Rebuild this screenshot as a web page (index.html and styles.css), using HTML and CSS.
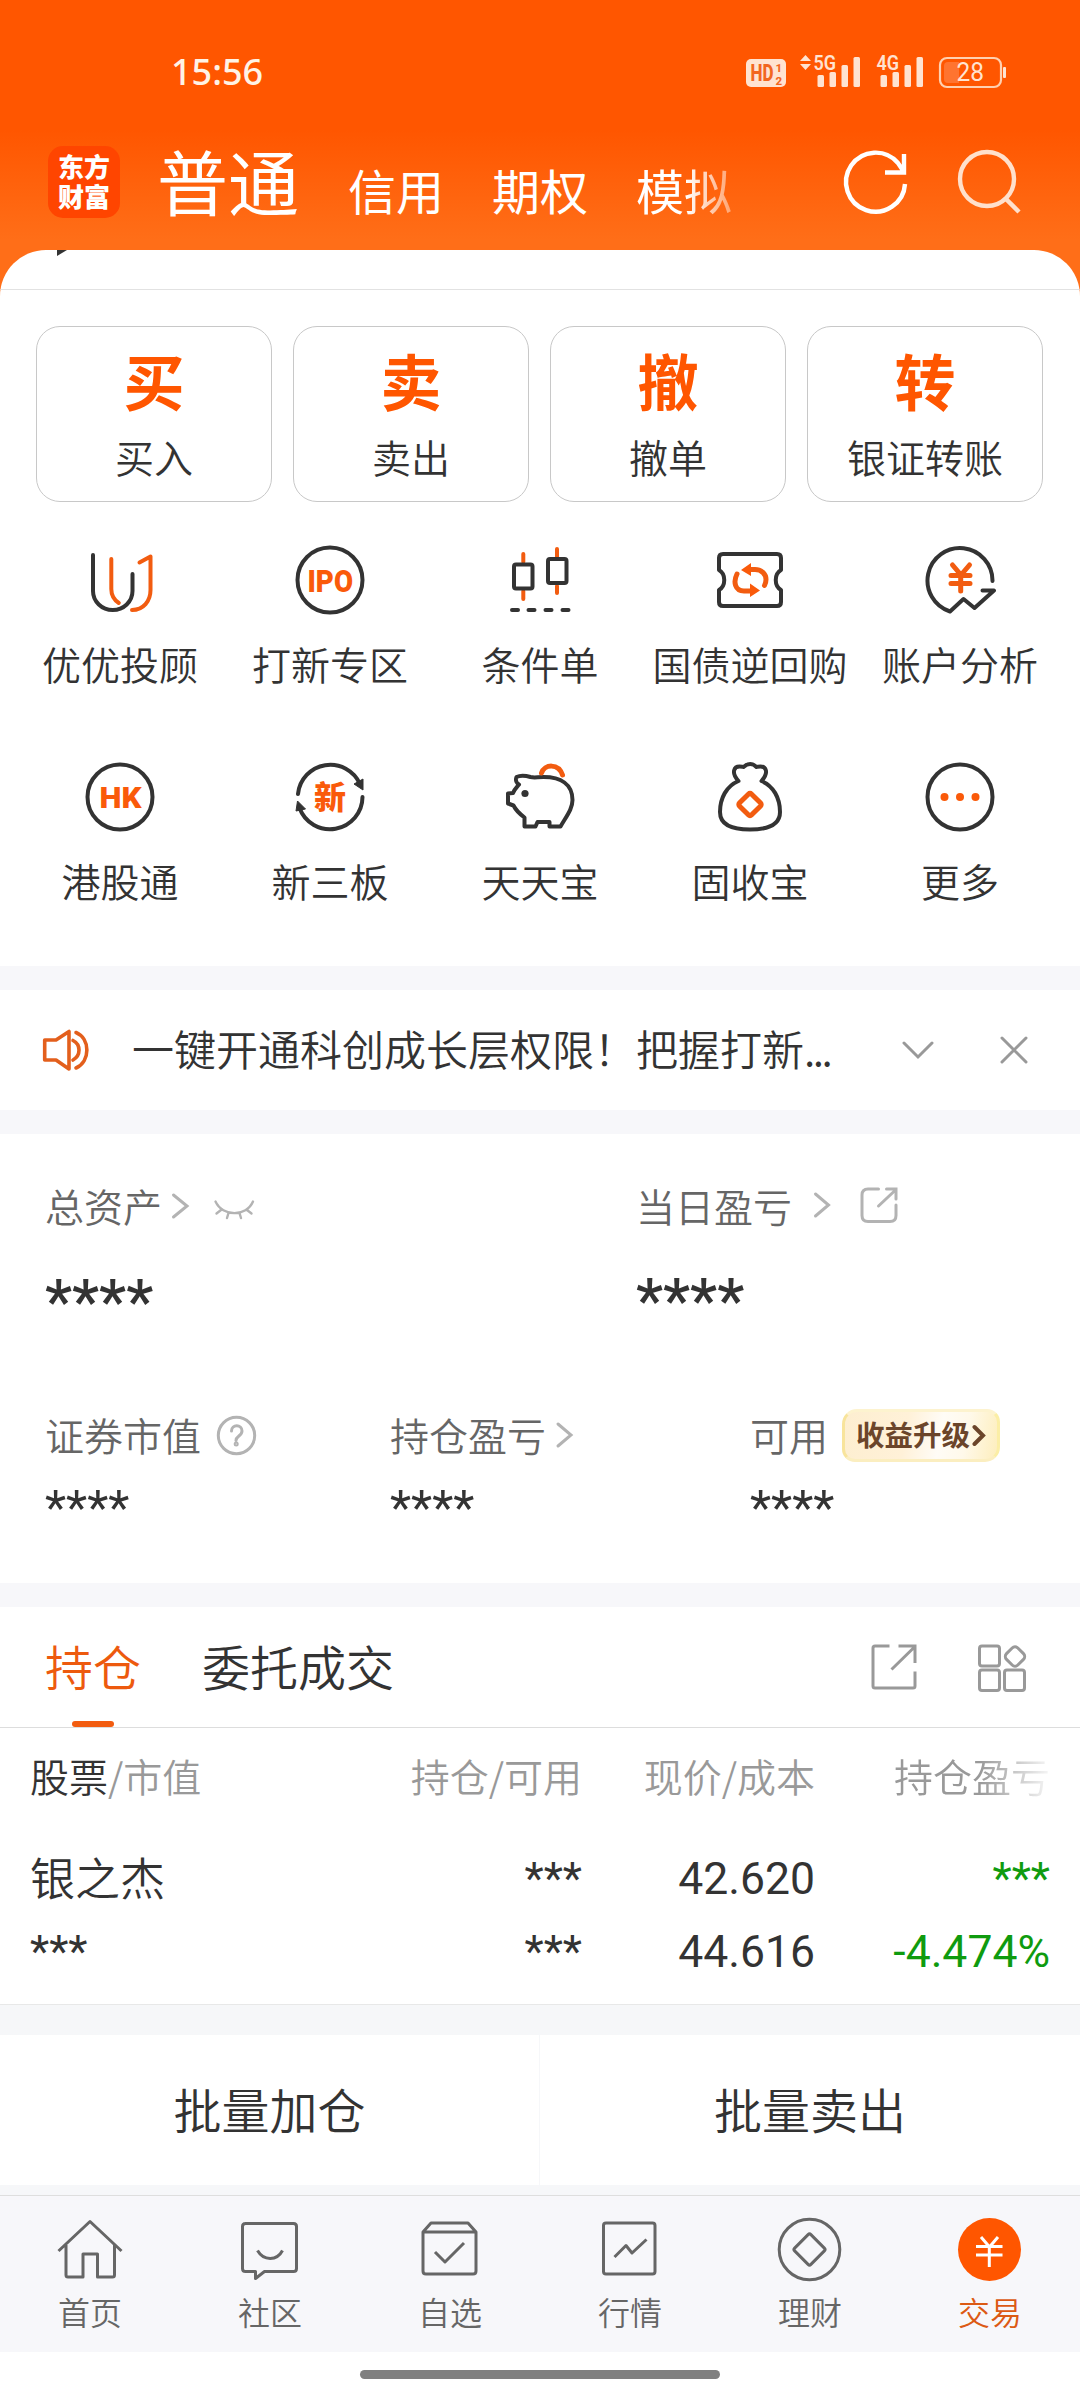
FILE: index.html
```html
<!DOCTYPE html>
<html lang="zh-CN">
<head>
<meta charset="utf-8">
<title>交易</title>
<link rel="stylesheet" href="styles.css">
</head>
<body>
<div class="screen">
  <header class="top">
    <div class="status">
      <span class="clock">15:56</span>
      <svg class="status-icons" viewBox="740 50 270 44" width="270" height="44">
        <g fill="#ffe3d1">
          <rect x="746" y="59" width="40" height="28" rx="5"/>
          <path d="M805.500 55l5.500 6h-11zM805.500 70l5.500-6h-11z"/>
          <rect x="817.500" y="75" width="6.500" height="12" rx="1.500"/><rect x="829.500" y="72" width="6.500" height="15" rx="1.500"/><rect x="841.500" y="65" width="6.500" height="22" rx="1.500"/><rect x="853.500" y="57" width="6.500" height="30" rx="1.500"/>
          <rect x="880.500" y="75" width="6.500" height="12" rx="1.500"/><rect x="892.500" y="72" width="6.500" height="15" rx="1.500"/><rect x="904.500" y="65" width="6.500" height="22" rx="1.500"/><rect x="916.500" y="57" width="6.500" height="30" rx="1.500"/>
          <rect x="1003" y="67" width="3" height="11" rx="1"/>
        </g>
        <rect x="940" y="58" width="61" height="29" rx="7" fill="none" stroke="#ffd0b0" stroke-width="2.200"/>
        <path d="M948 62h11v21h-11q-4 0-4-4v-13q0-4 4-4z" fill="#ff7430"/>
        <text class="st-hd" x="750.500" y="81" textLength="23" lengthAdjust="spacingAndGlyphs">HD</text>
        <text class="st-n" x="775.500" y="71.500">1</text><text class="st-n" x="775.500" y="84.500">2</text>
        <text class="st-g" x="813.500" y="70" textLength="22.500" lengthAdjust="spacingAndGlyphs">5G</text>
        <text class="st-g" x="876.500" y="70" textLength="22.500" lengthAdjust="spacingAndGlyphs">4G</text>
        <text class="st-b" x="956.500" y="81" textLength="27.500" lengthAdjust="spacingAndGlyphs">28</text>
      </svg>
    </div>
    <div class="titlebar">
      <div class="logo"><span>东方</span><span>财富</span></div>
      <nav class="modes">
        <span class="mode mode-on">普通</span><span class="mode">信用</span><span class="mode">期权</span><span class="mode mode-fade">模拟</span>
      </nav>
      <svg class="top-icons" viewBox="840 144 186 76" width="186" height="76" fill="none" stroke-width="4.400">
        <path d="M905 184A29.500 29.500 0 1 1 898 163L904 172M904 154v18.500h-19" stroke="#fff"/>
        <circle cx="987" cy="179" r="27" stroke="#ffe0cc"/><path d="M1006 199l13 13" stroke="#ffe0cc" stroke-width="4.500"/>
      </svg>
    </div>
  </header>

  <main>
    <section class="panel">
      <div class="strip"><svg viewBox="57 250 10 7" width="10" height="7"><path d="M57 250h10l-10 6z" fill="#333"/></svg></div>
      <div class="cards">
        <div class="card"><b>买</b><span>买入</span></div>
        <div class="card"><b>卖</b><span>卖出</span></div>
        <div class="card"><b>撤</b><span>撤单</span></div>
        <div class="card"><b>转</b><span>银证转账</span></div>
      </div>
      <div class="quick">
        <div class="q"><svg viewBox="84 544 72 72"><path class="k" d="M93 555v36a19.750 19 0 0 0 39.500 0v-17"/><path class="o" d="M111.300 559v30c0 6 3 11 7.500 14M139.500 562.500l11-6V590c0 11-7 20-18.500 20"/></svg><span>优优投顾</span></div>
        <div class="q"><svg viewBox="294 544 72 72"><circle class="k" cx="330" cy="580" r="32.500"/><text class="t" x="307.500" y="591.500" font-size="32" textLength="45.500" lengthAdjust="spacingAndGlyphs">IPO</text></svg><span>打新专区</span></div>
        <div class="q"><svg viewBox="504 544 72 72"><path class="o" d="M523.300 554v8M523.300 591v8M557 549v8M557 586v7"/><rect class="k" x="514" y="564.500" width="18.500" height="24" rx="2"/><rect class="k" x="548" y="559" width="18.500" height="24" rx="2"/><path class="k" d="M512 610h6M528.500 610h6M545.500 610h6M562.500 610h6"/></svg><span>条件单</span></div>
        <div class="q"><svg viewBox="714 544 72 72"><path class="k" d="M723 554h54q4 0 4 4v12c-7 4-7 16 0 20v12q0 4-4 4h-54q-4 0-4-4v-12c7-4 7-16 0-20v-12q0-4 4-4z"/><path class="o w" d="M750 569.500h5c7 0 11 5 11 10q0 3-1.500 6M737 574c-4 8-2 17 7 17h6"/><path d="M741 570l10-7v13zM760 590.500l-10-7v13.500z" fill="#fa5a0a"/></svg><span>国债逆回购</span></div>
        <div class="q"><svg viewBox="924 544 72 72"><path class="k" d="M992.500 581A32.500 32.500 0 1 0 950 611.500L963.500 599l11 9L994 590.500H982.500"/><path class="o w" d="M952.500 565l8.500 10 8.500-10M951 575.500h19M951 583.500h19M960.700 575v16"/></svg><span>账户分析</span></div>
        <div class="q"><svg viewBox="84 761 72 72"><circle class="k" cx="120" cy="797" r="32.500"/><text class="t" x="99.500" y="808" font-size="30" textLength="42" lengthAdjust="spacingAndGlyphs">HK</text></svg><span>港股通</span></div>
        <div class="q"><svg viewBox="294 761 72 72"><path class="k" d="M298 794A32.500 32.500 0 0 1 360 784M362.500 797A32.500 32.500 0 0 1 299.500 808"/><path d="M354 784l9-5v11zM297.500 801l8 8-9.500 2z" fill="#333" stroke="#333"/><text class="t" x="314" y="808.500" font-size="32">新</text></svg><span>新三板</span></div>
        <div class="q"><svg viewBox="504 761 72 72"><path class="k" d="M516.500 777c5-2.500 9-1.500 14 0 4 1 7 0 13 0 17 0 29 7 29 23 0 9-6 16-12 26.500h-11v-4.500h-12l-2 4.500h-11v-9c-4-3-8-6-11-12l-5.500-2v-10l5-.5c1.500-4 4-6 6-8.500-2-1-4-4-2.500-7.500z"/><path class="o w" d="M541.500 773c3-9 17-10 21 2"/><circle cx="525" cy="793.500" r="3.600" fill="#333"/></svg><span>天天宝</span></div>
        <div class="q"><svg viewBox="714 761 72 72"><path class="k" d="M738.500 781c-8-9-4-14.500 1-14.500q3 0 4 .5 7-6 13 0 1-.5 4-.5c5 0 9 5.500 1 14.500 12 5 18.500 17 18.500 31 0 12-10 17.500-30 17.500s-30-5.500-30-17.500c0-14 6.500-26 18.500-31z"/><rect class="o w" x="741.500" y="796" width="17" height="17" rx="2" transform="rotate(45 750 804.500)"/></svg><span>固收宝</span></div>
        <div class="q"><svg viewBox="924 761 72 72"><circle class="k" cx="960" cy="797" r="32.500"/><g fill="#fa5a0a"><circle cx="944.500" cy="797" r="4"/><circle cx="960" cy="797" r="4"/><circle cx="975.500" cy="797" r="4"/></g></svg><span>更多</span></div>
      </div>
    </section>

    <section class="notice">
      <svg viewBox="40 1026 52 48" width="52" height="48" fill="none" stroke="#e35f1c" stroke-width="3.600" stroke-linejoin="round" stroke-linecap="round"><path d="M44.700 1040H56l13-8.500v37.500l-13-9H44.700zM73 1040.500c8 4 8 15 0 19.500M76 1032.500c14.500 6 14.500 29 0 35.500"/></svg>
      <p>一键开通科创成长层权限！把握打新<span class="dots">...</span></p>
      <svg viewBox="900 1026 130 48" width="130" height="48" fill="none" stroke="#999" stroke-width="3" stroke-linecap="round"><path d="M904 1043l14 14 14-14M1002 1038l24 24M1026 1038l-24 24"/></svg>
    </section>

    <section class="assets">
      <div class="pair">
        <div>
          <div class="lbl">总资产<svg class="ml9" viewBox="171 1181 86 48" width="86" height="48"><path d="M173.500 1195l13.500 11-13.500 11" /><path d="M215.500 1201.500c7 15.500 31 15.500 37.500 0M221 1210l-4.500 3.500M228.500 1213l-1.500 5M239.500 1213l1.500 5M247 1210l4.500 3.500" stroke-width="2.400"/></svg></div>
          <div class="big">****</div>
        </div>
        <div>
          <div class="lbl">当日盈亏<svg class="ml21" viewBox="813 1181 86 48" width="86" height="48"><path d="M815.500 1194l13 11-13 11"/><path d="M878.500 1189H868q-6 0-6 6v20.500q0 6 6 6h22q6 0 6-6V1205M886.500 1189h9.500v10M895 1190.500l-16.500 15.500"/></svg></div>
          <div class="big up">****</div>
        </div>
      </div>
      <div class="trio">
        <div>
          <div class="lbl">证券市值<svg class="ml15" viewBox="216 1410 42 48" width="42" height="48"><circle cx="236.500" cy="1435.500" r="18.200"/><path d="M231.500 1431c0-7 10.500-7 10.500 0 0 5-6 5-6 9.500"/><circle cx="236.200" cy="1444" r="1" /></svg></div>
          <div class="small">****</div>
        </div>
        <div>
          <div class="lbl">持仓盈亏<svg class="ml9" viewBox="554 1410 20 48" width="20" height="48"><path d="M557 1424l13 11-13 11"/></svg></div>
          <div class="small">****</div>
        </div>
        <div>
          <div class="lbl">可用<span class="badge"><i>收益升级</i><svg viewBox="973 1424 14 22" width="14" height="22"><path d="M975.500 1427l8.500 8.500-8.500 8.500"/></svg></span></div>
          <div class="small">****</div>
        </div>
      </div>
    </section>

    <section class="hold">
      <div class="tabs">
        <span class="tab tab-on">持仓</span><span class="tab">委托成交</span>
        <svg viewBox="868 1640 162 56" width="162" height="56" fill="none" stroke="#999" stroke-width="3"><path d="M889.500 1646H875q-2 0-2 2v38q0 2 2 2h38q2 0 2-2v-14.500M898.500 1646h16.500v17M914 1647.500l-22.500 22"/><rect x="979.500" y="1646" width="20" height="20" rx="2.500"/><rect x="979.500" y="1670" width="20" height="20.500" rx="2.500"/><rect x="1004.500" y="1670" width="20" height="20.500" rx="2.500"/><rect x="1007" y="1648.500" width="16" height="16" rx="4" transform="rotate(45 1015 1656.500)"/></svg>
      </div>
      <div class="row head"><span><em>股票</em>/市值</span><span>持仓/可用</span><span>现价/成本</span><span><i class="fade">持仓盈亏</i></span></div>
      <div class="row"><span class="name">银之杰</span><span>***</span><span>42.620</span><span class="green">***</span></div>
      <div class="row"><span>***</span><span>***</span><span>44.616</span><span class="green">-4.474%</span></div>
    </section>

    <section class="batch"><span>批量加仓</span><span>批量卖出</span></section>
  </main>

  <nav class="nav">
    <div><svg viewBox="54 2213 72 72"><path d="M58.500 2251L90 2221.500l31.500 29.500M66 2245v30q0 2 2 2h15v-23h14.500v23h15q2 0 2-2v-30"/></svg><span>首页</span></div>
    <div><svg viewBox="234 2213 72 72"><path d="M245 2223.500h48.500q3 0 3 3v42q0 3-3 3H264.500l-9 7v-7H245.500q-3 0-3-3v-42q0-3 3-3zM257.500 2250.500c6 10.500 19.500 10.500 25 0"/></svg><span>社区</span></div>
    <div><svg viewBox="414 2213 72 72"><path d="M423 2232l8-9h37l8 9v39q0 3-3 3h-47q-3 0-3-3zM423 2232h53M435 2252l10 10 19-19"/></svg><span>自选</span></div>
    <div><svg viewBox="594 2213 72 72"><rect x="603.500" y="2223" width="51.500" height="51" rx="2.500"/><path d="M614.500 2257l11.500-11.500 6 7.500 14.500-13.500"/></svg><span>行情</span></div>
    <div><svg viewBox="774 2213 72 72"><circle cx="809.500" cy="2249.500" r="30.300"/><rect x="798" y="2238" width="23" height="23" rx="2" transform="rotate(45 809.500 2249.500)"/></svg><span>理财</span></div>
    <div class="on"><svg viewBox="954 2213 72 72"><circle cx="989.500" cy="2249.500" r="31.500" fill="#ff5600" stroke="none"/><path d="M981 2237l8.500 10 8.500-10M976 2246.500h26.500M976 2255h26.500M989.300 2247v20" stroke="#fff"/></svg><span>交易</span></div>
  </nav>
  <div class="gesture"><i></i></div>
</div>
</body>
</html>
```
FILE: styles.css
```css
* { box-sizing: border-box; }
body { margin: 0; font-family: "Noto Sans CJK SC", sans-serif; font-weight: 350; color: #333; }
p { margin: 0; }
i, em { font-style: normal; }
svg { display: block; flex: none; }

.screen { width: 1080px; height: 2400px; overflow: hidden; display: flex; flex-direction: column; background: linear-gradient(#ff5600 0, #ff5600 130px, #ff6e18 240px, #ff6e18 300px, #fff 300px); }

.top { height: 250px; color: #fff; }
.status { height: 100px; display: flex; justify-content: space-between; padding: 50px 70px 0 171px; }
.clock { font: 500 36px/44px "Noto Sans", sans-serif; color: #fff3e6; }
.status-icons text { font-family: Roboto, sans-serif; fill: #ffe3d1; }
.status-icons .st-hd { font-size: 23px; font-weight: 800; fill: #f2661f; }
.status-icons .st-n { font-size: 11.500px; font-weight: 800; fill: #f2661f; }
.status-icons .st-g { font-size: 21px; font-weight: 600; }
.status-icons .st-b { font-size: 25px; font-weight: 400; }

.titlebar { height: 150px; display: flex; padding: 0 54px 0 48px; align-items: flex-start; }
.logo { width: 72px; height: 72px; margin-top: 46px; border-radius: 15px; background: #ff4500; display: flex; flex-direction: column; align-items: center; padding-top: 5px; font-weight: 900; font-size: 26px; line-height: 30px; }
.modes { display: flex; align-items: flex-start; margin-left: 37px; flex: 1; }
.mode { font-size: 48px; line-height: 60px; margin: 59px 48px 0 0; font-weight: 400; }
.mode-on { font-size: 71px; line-height: 80px; margin-top: 39px; margin-right: 49px; }
.mode-fade { margin-right: 0; -webkit-mask-image: linear-gradient(90deg, #000 52%, rgba(0,0,0,.4) 100%); mask-image: linear-gradient(90deg, #000 52%, rgba(0,0,0,.4) 100%); }
.top-icons { margin-top: 44px; }

.panel { height: 716px; background: #fff; border-radius: 46px 46px 0 0; overflow: hidden; }
.strip { height: 40px; border-bottom: 1px solid #e2e2e2; padding-left: 57px; }
.cards { display: grid; grid-template-columns: repeat(4, 236px); gap: 21px; padding: 36px 36px 0; }
.card { height: 176px; border: 1px solid #c8c8c8; border-radius: 24px; display: flex; flex-direction: column; align-items: center; padding-top: 21px; font-size: 39px; line-height: 48px; }
.card b { font-size: 61px; line-height: 64px; font-weight: 700; color: #ff5600; margin-bottom: 20px; }
.quick { display: grid; grid-template-columns: repeat(5, 210px); padding: 42px 15px 0; row-gap: 74px; }
.q { display: flex; flex-direction: column; align-items: center; font-size: 39px; line-height: 48px; white-space: nowrap; }
.q svg { width: 72px; height: 72px; margin-bottom: 23px; }
.q .k, .q .o { fill: none; stroke: #333; stroke-width: 4; stroke-linecap: round; stroke-linejoin: round; }
.q .o { stroke: #f25c10; }
.q .w { stroke-width: 5; }
.q .t { font-family: Roboto, "Noto Sans CJK SC", sans-serif; font-weight: 900; fill: #fa5a0a; }

.notice { margin: 24px 0; height: 120px; background: #fff; display: flex; align-items: center; padding: 0 50px 0 40px; }
.notice, .assets, .hold { box-shadow: 0 -24px #f7f7fa, 0 24px #f7f7fa; position: relative; }
.notice p { flex: 1; font-size: 42px; line-height: 60px; margin: -4px 0 0 40px; white-space: nowrap; }
.dots { letter-spacing: -2.500px; }

.assets { height: 449px; background: #fff; padding: 47px 45px 0; }
.pair { display: grid; grid-template-columns: 591px 1fr; height: 229px; }
.trio { display: grid; grid-template-columns: 345px 360px 1fr; }
.lbl { display: flex; align-items: center; height: 48px; font-size: 39px; line-height: 48px; color: #666; white-space: nowrap; }
.lbl svg { fill: none; stroke: #b3b3b3; stroke-width: 3; stroke-linecap: round; }
.ml9 { margin-left: 9px; } .ml21 { margin-left: 21px; } .ml15 { margin-left: 15px; }
.big { font: 500 61px/60px Roboto, sans-serif; margin-top: 43px; }
.big.up { margin-top: 42px; }
.small { font: 400 49px/50px Roboto, sans-serif; margin-top: 25px; }
.badge { display: flex; align-items: center; justify-content: center; gap: 2px; width: 158px; height: 53px; margin: 2px 0 0 14px; border-radius: 15px 13px 15px 13px; border: 3px solid; border-color: #fdf3cf #fbeea6 #fbeec0 #f8e49c; background: linear-gradient(100deg, #fdeed0 0%, #fff1d8 40%, #fffcf6 62%, #fff9ea 78%, #fdeebd 100%); color: #6b452a; }
.badge i { font-size: 28.500px; line-height: 40px; font-weight: 700; margin-top: -3px; }
.lbl .badge svg { stroke: #6b452a; stroke-width: 4; }

.hold { margin-top: 24px; height: 397px; background: #fff; }
.tabs { height: 121px; border-bottom: 1px solid #ddd; display: flex; align-items: flex-start; padding: 0 50px 0 45px; font-size: 48px; line-height: 60px; }
.tab { height: 120px; padding-top: 28px; margin-right: 61px; display: flex; flex-direction: column; align-items: center; }
.tab-on { color: #ed5a0e; }
.tab-on::after { content: ""; width: 42px; height: 6px; border-radius: 3px; background: #f25c10; margin-top: 26px; }
.tabs svg { margin: 33px 0 0 auto; }
.row { display: grid; grid-template-columns: 322px 230px 233px 235px; padding: 0 30px; font: 400 44.500px/73px Roboto, "Noto Sans CJK SC", sans-serif; }
.row span { text-align: right; white-space: nowrap; }
.row span:first-child { text-align: left; }
.row .name { font-weight: 350; font-size: 45px; padding-top: 1px; height: 73px; }
.row.head { font: 350 39px/48px "Noto Sans CJK SC", sans-serif; color: #999; padding-top: 23px; margin-bottom: 44px; }
.head em { color: #333; }
.fade { -webkit-mask-image: linear-gradient(90deg, #000 55%, rgba(0,0,0,.08) 100%); mask-image: linear-gradient(90deg, #000 55%, rgba(0,0,0,.08) 100%); display: inline-block; }
.row .green { color: #0f9b0f; }

.batch { height: 191px; border-top: 1px solid #e8e8e8; background: #f6f7f9; padding: 30px 0 10px; display: grid; grid-template-columns: 539px 540px; gap: 1px; position: relative; }
.batch span { background: #fff; text-align: center; font-size: 48px; line-height: 146px; height: 150px; }

.nav { height: 157px; flex: none; border-top: 1px solid #dedede; background: #f7f7fa; display: grid; grid-template-columns: repeat(6, 180px); color: #666; padding-top: 17px; }
.nav div { display: flex; flex-direction: column; align-items: center; font-size: 32px; line-height: 40px; }
.nav svg { width: 72px; height: 72px; fill: none; stroke: #666; stroke-width: 3; stroke-linejoin: round; margin-bottom: 6px; }
.nav .on { color: #dc5a14; }
.gesture { flex: 1; background: #fff; display: flex; justify-content: center; padding-top: 18px; }
.gesture i { width: 360px; height: 9px; border-radius: 5px; background: #808080; }
```
